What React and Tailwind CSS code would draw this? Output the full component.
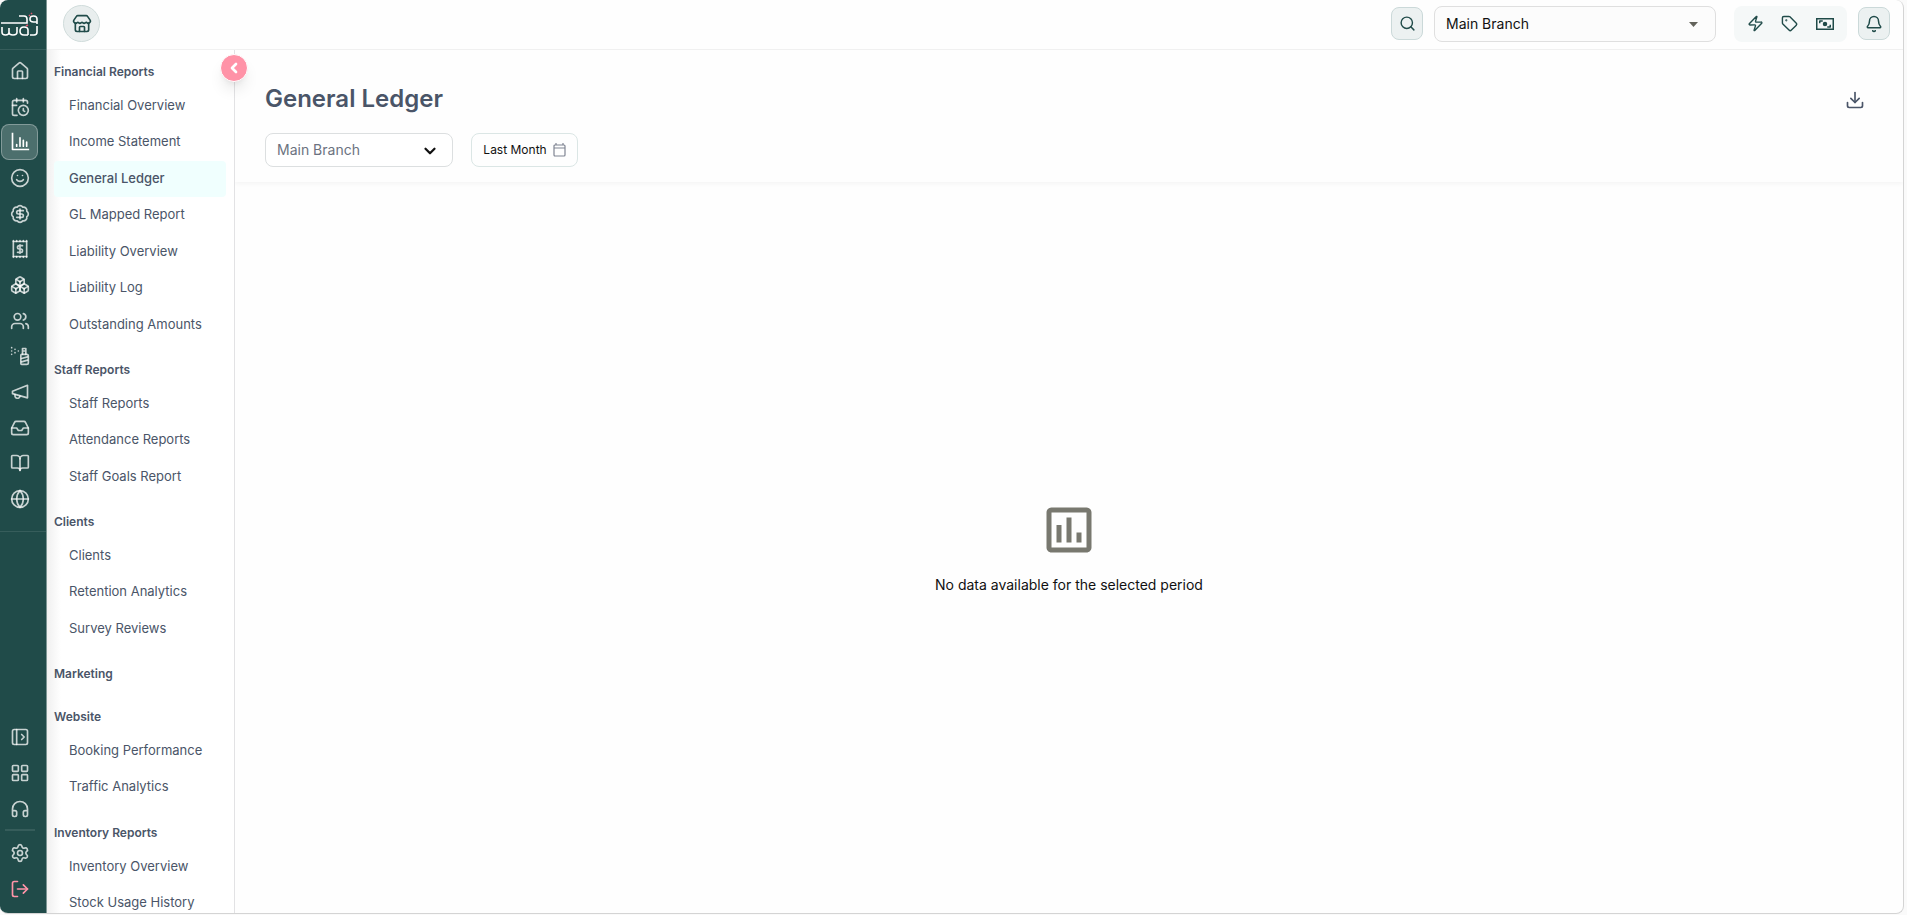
import {
  House, CalendarClock, Smile, BadgeDollarSign, Inbox, BookOpen, Globe, Users, Boxes,
  Headphones, Settings, LogOut, Search, Zap, Tag, Bell, Download, ChevronLeft, ChevronDown,
  LayoutGrid, Store,
} from 'lucide-react'
import { MdOutlineAssessment } from 'react-icons/md'

const Svg = ({ size = 20, children, width = 2 }) => (
  <svg width={size} height={size} viewBox="0 0 24 24" fill="none" stroke="currentColor"
    strokeWidth={width} strokeLinecap="round" strokeLinejoin="round" aria-hidden="true">
    {children}
  </svg>
)

const ChartIcon = () => (
  <Svg><path d="M3 2v19h19" strokeLinecap="square" /><path d="M8 17v-2M12 17V7M16 17v-7M20 17v-5" /></Svg>
)

const ReceiptIcon = () => (
  <Svg>
    <path d="M4 3h16v18H4z" />
    <path d="M4 22v-1M8 22v-1M12 22v-1M16 22v-1M20 22v-1M4 3V2M8 3V2M12 3V2M16 3V2M20 3V2" />
    <path d="M15 8h-4a2 2 0 0 0 0 4h2a2 2 0 0 1 0 4H9M12 7v10" />
  </Svg>
)

const SprayIcon = () => (
  <Svg>
    <path d="M14 10h6a2 2 0 0 1 2 2v8a2 2 0 0 1-2 2h-6a1 1 0 0 1-1-1V11a1 1 0 0 1 1-1z" />
    <path d="M15 10V6h4v4M15 3h4v3h-4zM14 15l7-2M14 19l7-2" />
    <path d="M2 2h.01M2 6h.01M2 10h.01M6 4h.01M6 8h.01M10 6h.01" />
  </Svg>
)

const HornIcon = () => (
  <Svg><path d="M21 4v15L3 14v-3z" /><path d="M6 15v1a3 3 0 0 0 6 1" /></Svg>
)

const PanelIcon = () => (
  <Svg><rect x="3" y="3" width="18" height="18" rx="2" /><path d="M8 3v18M14 9l3 3-3 3" /></Svg>
)

const CashIcon = () => (
  <Svg size={18}>
    <path d="M1 5h22v14H1z" strokeLinejoin="miter" />
    <path d="M5 11V8h4M19 13v3h-4" strokeLinecap="butt" />
    <circle cx="12" cy="12" r="2" fill="currentColor" />
  </Svg>
)

const CalendarIcon = () => (
  <svg width="13" height="14" viewBox="0 0 13 14" fill="none" stroke="#7f8492" strokeWidth="1.2" aria-hidden="true">
    <rect x="1" y="2" width="11" height="11" rx="1" />
    <path d="M1 5h11M3 0v2M10 0v2" />
  </svg>
)

const Logo = () => (
  <svg width="40" height="28" viewBox="0 0 40 28" fill="none" stroke="white" strokeWidth="1.6" aria-hidden="true">
    <path d="M1 12h26V8q0-3-3-3h-5" />
    <path d="M37 13V8q0-3-3.500-3T30 8q0 3 3.500 3H37" />
    <path d="M2 16v5q0 3 3.500 3T9 21v-4 4q0 3 4 3t4-3v-5" />
    <path d="M28 24v-5q0-3-4-3t-4 4 4 4h4M37 15v6q0 3-3 3h-4" />
    <path d="M29 5l1-1M31 3l1-1M26 15l2-1" stroke="#e0566f" />
  </svg>
)

const NAV = [
  ['Home', House], ['Calendar', CalendarClock], ['Reports', ChartIcon], ['Clients', Smile],
  ['Sales', BadgeDollarSign], ['Invoices', ReceiptIcon], ['Inventory', Boxes], ['Team', Users],
  ['Services', SprayIcon], ['Marketing', HornIcon], ['Inbox', Inbox], ['Catalog', BookOpen], ['Website', Globe],
]

const NAV_BOTTOM = [['Expand', PanelIcon], ['Apps', LayoutGrid], ['Support', Headphones]]

const MENU = [
  { title: 'Financial Reports', items: ['Financial Overview', 'Income Statement', 'General Ledger', 'GL Mapped Report', 'Liability Overview', 'Liability Log', 'Outstanding Amounts'] },
  { title: 'Staff Reports', items: ['Staff Reports', 'Attendance Reports', 'Staff Goals Report'] },
  { title: 'Clients', items: ['Clients', 'Retention Analytics', 'Survey Reviews'] },
  { title: 'Marketing', items: [] },
  { title: 'Website', items: ['Booking Performance', 'Traffic Analytics'] },
  { title: 'Inventory Reports', items: ['Inventory Overview', 'Stock Usage History'] },
]

function NavButton({ label, icon: Icon, active, className = 'text-white/75' }) {
  return (
    <button aria-label={label}
      className={`flex h-9 w-[37px] shrink-0 items-center justify-center rounded-lg border ${active ? 'border-white/30 bg-white/20 text-white' : `border-transparent ${className}`}`}>
      <Icon size={20} />
    </button>
  )
}

function Rail() {
  return (
    <nav className="flex w-[47px] shrink-0 flex-col border-r border-[#7d9694] bg-[#204b49]">
      <div className="flex h-[50px] shrink-0 items-center border-b border-white/10">
        <Logo />
      </div>
      <div className="flex h-[482px] shrink-0 flex-col border-b border-white/10 pt-[3px] pb-[14px] pl-px">
        {NAV.map(([label, icon]) => (
          <div key={label} className="flex min-h-0 flex-1 items-center">
            <NavButton label={label} icon={icon} active={label === 'Reports'} />
          </div>
        ))}
      </div>
      <div className="mt-auto flex flex-col pb-[6px] pl-px">
        {NAV_BOTTOM.map(([label, icon]) => (
          <NavButton key={label} label={label} icon={icon} />
        ))}
        <div className="mt-[2px] mb-1 ml-1 h-[2px] w-[30px] bg-white/10" />
        <NavButton label="Settings" icon={Settings} />
        <NavButton label="Log out" icon={LogOut} className="text-[#ff94a8]" />
      </div>
    </nav>
  )
}

function ReportMenu() {
  return (
    <aside className="relative w-[188px] shrink-0 border-r border-[#e2e2e4] bg-linear-to-r from-[#f0f0f0] to-white to-[14px]">
      <div className="flex h-full flex-col gap-[11px] overflow-hidden pt-[6px] pr-2 pl-[7px]">
        {MENU.map(group => (
          <section key={group.title} className="shrink-0">
            <h2 className="flex h-8 items-center text-xs font-semibold">{group.title}</h2>
            <ul>
              {group.items.map(item => (
                <li key={item} className="h-9 even:h-[37px]">
                  <a href="#" className={`flex h-9 items-center rounded pl-[15px] text-[13px] whitespace-nowrap ${item === 'General Ledger' ? 'bg-[#f0fffe] font-medium' : ''}`}>
                    {item}
                  </a>
                </li>
              ))}
            </ul>
          </section>
        ))}
      </div>
      <button aria-label="Collapse menu"
        className="absolute top-1 -right-[14px] flex size-7 items-center justify-center rounded-full border border-white bg-[#ff92a7] text-white shadow-lg">
        <ChevronLeft size={16} strokeWidth={4} />
      </button>
    </aside>
  )
}

function TopBar() {
  const square = 'flex h-[33px] w-8 items-center justify-center rounded-lg border border-[#cbd9d9] bg-[#ecf1f1]'
  return (
    <header className="flex h-[50px] shrink-0 items-center border-b border-[#f1f1f1] pr-[13px] pb-[2px] pl-4 text-[#204b49]">
      <button aria-label="Store" className="flex size-[37px] items-center justify-center rounded-full border border-[#cfdbda] bg-[#e9eeee]">
        <Store size={20} />
      </button>
      <div className="ml-auto flex items-center">
        <button aria-label="Search" className={square}><Search size={17} /></button>
        <div className="relative ml-[11px]">
          <select aria-label="Branch" className="h-9 w-[282px] appearance-none rounded-lg border border-[#dfdfdf] bg-[#fcfcfc] px-[11px] text-sm text-[#111]">
            <option>Main Branch</option>
          </select>
          <svg className="pointer-events-none absolute top-4 right-[18px]" width="9" height="5" aria-hidden="true">
            <path d="M0 0h9L4.500 5z" fill="#63635b" />
          </svg>
        </div>
        <div className="ml-[18px] flex h-9 w-[113px] items-center justify-around rounded-lg bg-[#f5f8f8] px-1">
          <button aria-label="Quick actions"><Zap size={17} /></button>
          <button aria-label="Offers"><Tag size={17} /></button>
          <button aria-label="Cash"><CashIcon /></button>
        </div>
        <button aria-label="Notifications" className={`${square} ml-[11px]`}><Bell size={18} /></button>
      </div>
    </header>
  )
}

function Ledger() {
  return (
    <main className="flex min-w-0 flex-1 flex-col">
      <div className="flex h-[132px] shrink-0 items-start justify-between px-[30px] pt-[31px] shadow-[0_2px_4px_rgba(0,0,0,0.04)]">
        <div>
          <h1 className="text-2xl leading-9 font-semibold">General Ledger</h1>
          <div className="mt-4 flex gap-[18px]">
            <div className="relative">
              <select aria-label="Report branch" className="h-[34px] w-[188px] appearance-none rounded-lg border border-[#dcdfe0] bg-white px-[11px] text-sm text-[#6b7280]">
                <option>Main Branch</option>
              </select>
              <ChevronDown size={18} strokeWidth={3} className="pointer-events-none absolute top-[9px] right-[14px] text-[#111]" />
            </div>
            <button className="flex h-[34px] w-[107px] items-center justify-center gap-[6px] rounded-lg border border-[#dbe6e5] text-xs text-[#111]">
              Last Month
              <CalendarIcon />
            </button>
          </div>
        </div>
        <button aria-label="Download" className="mt-[9px] mr-2"><Download size={20} /></button>
      </div>
      <div className="flex flex-1 flex-col items-center justify-center gap-[15px] text-[#111]">
        <MdOutlineAssessment size={60} className="text-[#78786f]" />
        <p className="text-sm">No data available for the selected period</p>
      </div>
    </main>
  )
}

export default function App() {
  return (
    <div className="h-screen bg-[#fafafa] pr-[3px] pb-px font-[Inter,sans-serif] text-[#4a5568]">
      <div className="flex h-full overflow-hidden rounded-lg border-r border-b border-[#d4d4d4] bg-[#fefefe]">
        <Rail />
        <div className="flex min-w-0 flex-1 flex-col">
          <TopBar />
          <div className="flex min-h-0 flex-1">
            <ReportMenu />
            <Ledger />
          </div>
        </div>
      </div>
    </div>
  )
}
